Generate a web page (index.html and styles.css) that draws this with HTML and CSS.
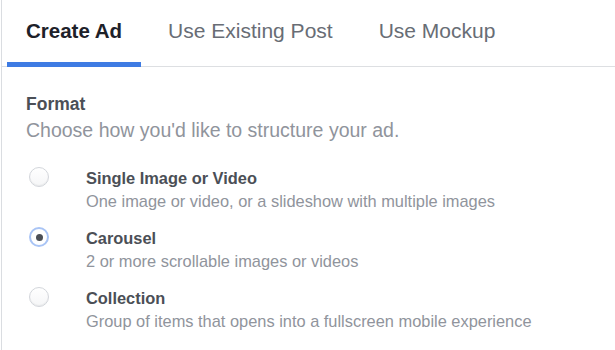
FILE: index.html
```html
<!DOCTYPE html>
<html>
<head>
  <title>Create Ad</title>
  <link rel="stylesheet" href="styles.css">
</head>
<body>

  <div class="card">
    <div class="tabs">
      <button class="tab active">Create Ad</button>
      <button class="tab">Use Existing Post</button>
      <button class="tab">Use Mockup</button>
    </div>

    <div class="section">
      <div class="label">Format</div>
      <div class="hint">Choose how you'd like to structure your ad.</div>

      <div class="options">
        <label class="option">
          <input type="radio" name="format">
          <span class="option-text">
            <span class="option-title">Single Image or Video</span>
            <span class="option-desc">One image or video, or a slideshow with multiple images</span>
          </span>
        </label>
        <label class="option">
          <input type="radio" name="format" checked>
          <span class="option-text">
            <span class="option-title">Carousel</span>
            <span class="option-desc">2 or more scrollable images or videos</span>
          </span>
        </label>
        <label class="option">
          <input type="radio" name="format">
          <span class="option-text">
            <span class="option-title">Collection</span>
            <span class="option-desc">Group of items that opens into a fullscreen mobile experience</span>
          </span>
        </label>
      </div>
    </div>
  </div>

</body>
</html>
```

FILE: styles.css
```css
body {
  margin: 0;
  background: #fff;
  font-family: "Liberation Sans", Helvetica, Arial, sans-serif;
}

.card {
  margin-left: 1px;
  min-height: 350px;
  border-left: 1px solid #dadde1;
  background: #fff;
}

.tabs {
  display: flex;
  gap: 8px;
  padding-left: 5px;
  border-bottom: 1px solid #dddfe2;
}

.tab {
  padding: 19px 19px 19px;
  margin-bottom: -1px;
  border: none;
  border-bottom: 5px solid transparent;
  background: none;
  font-family: inherit;
  font-size: 21px;
  line-height: 24px;
  color: #686d75;
  cursor: pointer;
}

.tab.active {
  font-size: 20.5px;
  color: #1d2129;
  font-weight: bold;
  border-bottom-color: #3e7be3;
}

.section {
  padding: 27px 24px 0;
}

.label {
  font-size: 17.5px;
  line-height: 20px;
  font-weight: bold;
  color: #4b4f56;
}

.hint {
  margin-top: 4px;
  font-size: 19.5px;
  line-height: 24px;
  color: #90949c;
}

.options {
  display: flex;
  flex-direction: column;
  gap: 16px;
  margin-top: 26px;
}

.option {
  display: flex;
  align-items: flex-start;
  cursor: pointer;
}

.option input {
  appearance: none;
  -webkit-appearance: none;
  width: 20px;
  height: 20px;
  margin: -1px 37px 0 3px;
  border: 1px solid #d3d6db;
  border-radius: 50%;
  background: linear-gradient(#fff, #f5f6f7);
  box-shadow: inset 0 -1px 1px rgba(0, 0, 0, 0.05);
  display: flex;
  align-items: center;
  justify-content: center;
  flex-shrink: 0;
}

.option input:checked {
  border: 2px solid #a9c4f5;
  background: #fff;
  box-shadow: none;
}

.option input:checked::after {
  content: "";
  width: 7px;
  height: 7px;
  border-radius: 50%;
  background: #4b4f56;
}

.option-text {
  display: flex;
  flex-direction: column;
}

.option-title {
  font-size: 16.4px;
  line-height: 20px;
  font-weight: bold;
  color: #4b4f56;
}

.option-desc {
  margin-top: 2px;
  font-size: 16.4px;
  line-height: 22px;
  color: #90949c;
}
```
